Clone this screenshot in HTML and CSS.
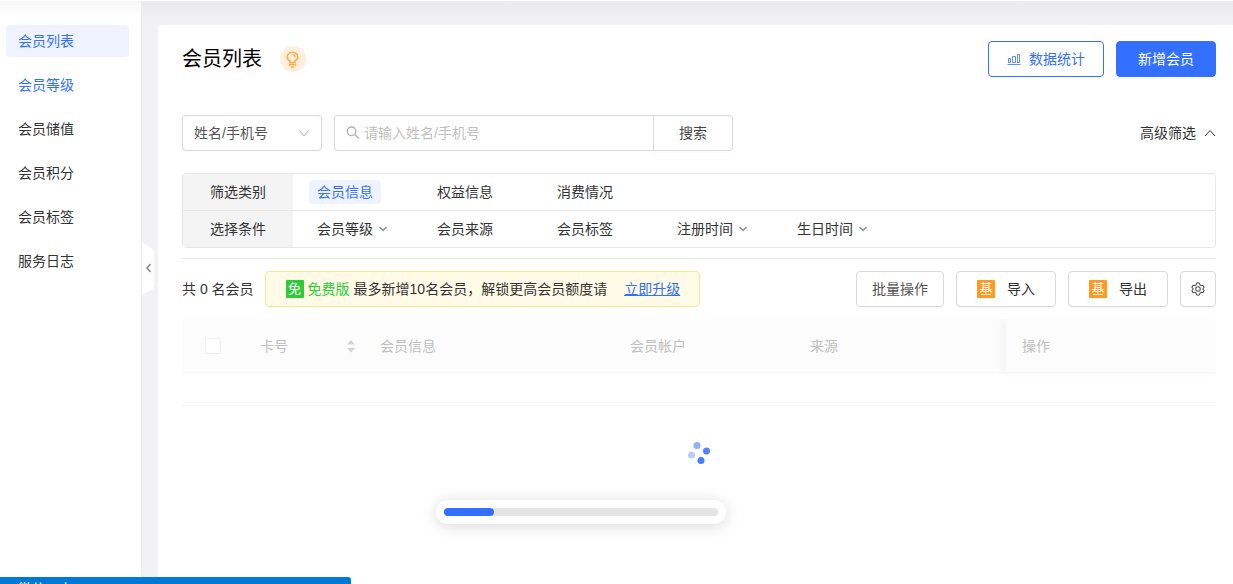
FILE: index.html
```html
<!DOCTYPE html>
<html lang="zh-CN">
<head>
<meta charset="utf-8">
<meta name="viewport" content="width=device-width, initial-scale=1">
<title>会员列表</title>
<link rel="stylesheet" href="styles.css">
</head>
<body>
<div class="app">
  <aside class="sidebar">
    <nav class="menu">
      <a class="menu-item selected" href="#">会员列表</a>
      <a class="menu-item hovered" href="#">会员等级</a>
      <a class="menu-item" href="#">会员储值</a>
      <a class="menu-item" href="#">会员积分</a>
      <a class="menu-item" href="#">会员标签</a>
      <a class="menu-item" href="#">服务日志</a>
    </nav>
    <button class="collapse" type="button" aria-label="收起菜单">
      <svg width="14" height="54" viewBox="0 0 14 54"><path d="M1 0L10 6Q13.500 8 13.500 12V42Q13.500 46 10 48L1 53Z" fill="#fff"/><path d="M9.500 22L6 26L9.500 30" fill="none" stroke="#80868d" stroke-width="1.500"/></svg>
    </button>
  </aside>

  <main class="panel">
    <header class="head">
      <h1 class="title">会员列表</h1>
      <span class="bulb">
        <svg width="26" height="26" viewBox="0 0 26 26" fill="none" stroke="#ffab4a" stroke-width="1.500"><path d="M10 16.800V14.800C8.200 14 7.200 12.600 7.200 11A5.300 4.800 0 0 1 17.800 11C17.800 12.600 16.800 14 15 14.800V16.800Z"/><path d="M12.500 8.500Q15 8.500 15.200 11" stroke-width="1.200"/><path d="M9 18.800H16M10.800 21H14.200"/></svg>
      </span>
      <div class="head-actions">
        <button class="btn btn-outline" type="button">
          <svg width="14" height="14" viewBox="0 0 14 14" fill="none" stroke="currentColor"><path d="M.5 12.500H13.500M1.500 10.500V6.500H3.500V10.500ZM5.500 10.500V4.500H8.500V10.500ZM10.500 10.500V2.500H12.500V10.500Z" stroke-width=".8"/></svg>
          数据统计
        </button>
        <button class="btn btn-primary" type="button">新增会员</button>
      </div>
    </header>

    <form class="search-row">
      <div class="select-box">
        <select aria-label="搜索字段"><option>姓名/手机号</option></select>
        <svg class="select-arrow" width="12" height="12" viewBox="0 0 12 12" fill="none" stroke="#b5b7ba"><path d="M1 2.500L6 9L11 2.500"/></svg>
      </div>
      <div class="search-group">
        <label class="search-field">
          <svg width="14" height="14" viewBox="0 0 14 14" fill="none" stroke="#b0b0b0" stroke-width="1.300"><circle cx="5.500" cy="5.300" r="4.300"/><path d="M8.700 8.500L13 12.500"/></svg>
          <input type="text" placeholder="请输入姓名/手机号" aria-label="姓名/手机号">
        </label>
        <button class="btn search-btn" type="button">搜索</button>
      </div>
      <button class="advanced" type="button">高级筛选
        <svg width="12" height="12" viewBox="0 0 12 12" fill="none" stroke="#333"><path d="M1 9L6 3.500L11 9"/></svg>
      </button>
    </form>

    <section class="filters">
      <div class="filter-row">
        <div class="filter-label">筛选类别</div>
        <div class="filter-items">
          <button class="filter-item active" type="button">会员信息</button>
          <button class="filter-item" type="button">权益信息</button>
          <button class="filter-item" type="button">消费情况</button>
        </div>
      </div>
      <div class="filter-row">
        <div class="filter-label">选择条件</div>
        <div class="filter-items">
          <button class="filter-item" type="button">会员等级 <svg width="10" height="10" viewBox="0 0 10 10"><path d="M1.500 3L5 6.500L8.500 3"/></svg></button>
          <button class="filter-item" type="button">会员来源</button>
          <button class="filter-item" type="button">会员标签</button>
          <button class="filter-item" type="button">注册时间 <svg width="10" height="10" viewBox="0 0 10 10"><path d="M1.500 3L5 6.500L8.500 3"/></svg></button>
          <button class="filter-item" type="button">生日时间 <svg width="10" height="10" viewBox="0 0 10 10"><path d="M1.500 3L5 6.500L8.500 3"/></svg></button>
        </div>
      </div>
    </section>

    <div class="toolbar">
      <span class="count">共 0 名会员</span>
      <div class="notice">
        <span class="tag tag-free">免</span>
        <span class="free">免费版</span>
        <span class="limit">最多新增10名会员，解锁更高会员额度请</span>
        <a class="upgrade" href="#">立即升级</a>
      </div>
      <div class="tools">
        <button class="btn tool-batch" type="button">批量操作</button>
        <button class="btn tool-io" type="button"><span class="tag tag-basic">基</span>导入</button>
        <button class="btn tool-io" type="button"><span class="tag tag-basic">基</span>导出</button>
        <button class="btn tool-gear" type="button" aria-label="设置">
          <svg width="14" height="14" viewBox="0 0 16 16" fill="none" stroke="#555" stroke-width="1.200" stroke-linejoin="round"><path d="M6.300 1.500L8 .8L9.700 1.500L10.300 3.400L11.800 4.200L13.700 3.700L15 6.200L13.700 7.500V8.500L15 9.800L13.700 12.300L11.800 11.800L10.300 12.600L9.700 14.500L8 15.200L6.300 14.500L5.700 12.600L4.200 11.800L2.300 12.300L1 9.800L2.300 8.500V7.500L1 6.200L2.300 3.700L4.200 4.200L5.700 3.400Z"/><circle cx="8" cy="8" r="2.600"/></svg>
        </button>
      </div>
    </div>

    <div class="table-wrap">
      <table class="members">
        <colgroup><col class="c-check"><col class="c-card"><col class="c-info"><col class="c-account"><col><col class="c-action"></colgroup>
        <thead>
          <tr>
            <th class="check"><input type="checkbox" aria-label="全选"></th>
            <th><span class="sortable">卡号<svg width="8" height="14" viewBox="0 0 8 14" fill="#d2d2d2"><path d="M4 1L8 5.500H0ZM4 13.500L8 9H0Z"/></svg></span></th>
            <th>会员信息</th>
            <th>会员帐户</th>
            <th>来源</th>
            <th class="fixed">操作</th>
          </tr>
        </thead>
        <tbody><tr><td colspan="6"></td></tr></tbody>
      </table>
    </div>
    <svg class="spinner" width="24" height="24" viewBox="0 0 24 24" fill="#3370ff" role="img" aria-label="加载中"><circle cx="10" cy="4.500" r="3.500" opacity=".55"/><circle cx="19.500" cy="10" r="3.500" opacity=".85"/><circle cx="4.500" cy="14" r="3.500" opacity=".35"/><circle cx="14" cy="19.500" r="3.500" opacity=".9"/></svg>
  </main>
</div>
<div class="progress-card"><div class="progress" role="progressbar" aria-label="加载进度" aria-valuenow="18" aria-valuemin="0" aria-valuemax="100"><div class="progress-fill" style="width:18.300%"></div></div></div>
<div class="status">微信 - 小二</div>
</body>
</html>
```
FILE: styles.css
```css
* { box-sizing: border-box; }
body {
  margin: 0;
  height: 100vh;
  overflow: hidden;
  background: #f2f2f5;
  color: #333;
  font: 14px/22px "Liberation Sans", "Noto Sans CJK SC", sans-serif;
}
button, input, select { font: inherit; color: inherit; }
button { margin: 0; padding: 0; border: 0; background: none; }
a { color: inherit; text-decoration: none; }
svg { display: block; flex: none; }

.app {
  display: flex;
  height: 100%;
  border-top: 1px solid #fff;
  background: linear-gradient(#ebebee, #f2f2f5 24px) padding-box;
}
.sidebar {
  position: relative;
  flex: none;
  width: 142px;
  padding: 24px 12px 0 6px;
  background: linear-gradient(#f7f7f7, #fff 16px);
  border-right: 1px solid #ebebee;
}
.menu { display: flex; flex-direction: column; gap: 12px; }
.menu-item { padding: 5px 12px; border-radius: 4px; }
.menu-item.selected { background: #eff3ff; color: #3370ff; }
.menu-item.hovered { color: #3370ff; }
.collapse { position: absolute; left: 100%; top: 241px; }

.panel {
  flex: 1;
  min-width: 0;
  margin: 24px 0 0 16px;
  padding: 16px 17px 0 24px;
  background: #fff;
  border-radius: 4px 0 0 0;
}
.head { display: flex; align-items: center; height: 36px; }
.title { margin: 0; font-size: 20px; line-height: 28px; font-weight: 400; color: #000; }
.bulb { margin-left: 18px; border-radius: 50%; background: #ffefdc; }
.head-actions { display: flex; gap: 12px; margin-left: auto; }
.btn {
  display: flex;
  align-items: center;
  justify-content: center;
  height: 36px;
  border: 1px solid #d9d9d9;
  border-radius: 4px;
  background: #fff;
  box-shadow: 0 2px 0 rgba(0, 0, 0, .015);
}
.btn-outline { gap: 8px; width: 116px; border-color: #3370ff; color: #3370ff; }
.btn-primary { width: 100px; border-color: #3370ff; background: #3370ff; color: #fff; }

.search-row { display: flex; align-items: center; gap: 12px; margin-top: 38px; }
.select-box { display: grid; align-items: center; width: 140px; }
.select-box > * { grid-area: 1 / 1; }
.select-box select {
  width: 100%;
  height: 36px;
  padding: 0 11px;
  border: 1px solid #d9d9d9;
  border-radius: 4px;
  background: #fff;
  color: #555;
  appearance: none;
}
.select-arrow { justify-self: end; margin-right: 12px; pointer-events: none; }
.search-group { display: flex; }
.search-field {
  display: flex;
  align-items: center;
  gap: 4px;
  width: 319px;
  height: 36px;
  padding: 0 11px;
  border: 1px solid #d9d9d9;
  border-right: 0;
  border-radius: 4px 0 0 4px;
}
.search-field input { flex: 1; min-width: 0; padding: 0; border: 0; outline: 0; background: none; }
.search-field input::placeholder { color: #bfbfbf; }
.search-btn { width: 80px; border-radius: 0 4px 4px 0; color: #444; }
.advanced { display: flex; align-items: center; gap: 8px; margin-left: auto; }

.filters { margin-top: 22px; border: 1px solid #e8e8e8; border-radius: 4px; }
.filter-row { display: flex; height: 36px; }
.filter-row + .filter-row { height: 37px; border-top: 1px solid #e8e8e8; }
.filter-label { display: flex; align-items: center; justify-content: center; width: 110px; background: #f4f4f4; }
.filter-items { display: grid; grid-template-columns: repeat(5, 120px); align-items: center; justify-items: start; padding-left: 16px; }
.filter-item { display: flex; align-items: center; gap: 5px; height: 24px; padding: 0 8px; border-radius: 4px; }
.filter-item.active { background: #eff3ff; color: #3370ff; }
.filter-item svg { fill: none; stroke: #8a8f94; stroke-width: 1.500; }

.toolbar {
  display: flex;
  align-items: center;
  margin-top: 10px;
  padding-top: 12px;
  border-top: 1px solid #e8e8e8;
}
.count { margin-right: 11px; white-space: nowrap; }
.notice {
  display: flex;
  align-items: center;
  height: 36px;
  padding: 0 19px 0 20px;
  border: 1px solid #ffe58f;
  border-radius: 4px;
  background: #fffbe6;
  white-space: nowrap;
}
.tag { width: 18px; height: 18px; font-size: 13px; line-height: 18px; text-align: center; color: #fff; }
.tag-free { background: #2ccc38; border-radius: 1px; }
.tag-basic { background: #ff9a1f; border-radius: 1px; }
.free { margin: 0 4px; color: #2ccc38; }
.upgrade { margin-left: 17px; color: #3370ff; text-decoration: underline; }
.tools { display: flex; gap: 12px; margin-left: auto; }
.tool-batch { width: 88px; color: #555; }
.tool-io { gap: 12px; width: 100px; }
.tool-gear { width: 36px; }

.table-wrap { margin-top: 12px; border-radius: 4px 4px 0 0; overflow: hidden; }
.members { width: 100%; border-spacing: 0; table-layout: fixed; }
.c-check { width: 62px; }
.c-card { width: 120px; }
.c-info { width: 250px; }
.c-account { width: 180px; }
.c-action { width: 210px; }
.members th {
  height: 54px;
  padding: 0 16px;
  border-bottom: 1px solid #f7f7f7;
  background: #fcfcfc;
  color: #bfbfbf;
  font-weight: 400;
  text-align: left;
}
.members th.check { padding: 0; text-align: center; }
.members input {
  display: block;
  width: 16px;
  height: 16px;
  margin: 0 auto;
  border: 1px solid #efefef;
  border-radius: 2px;
  background: #fff;
  appearance: none;
}
.sortable { display: flex; align-items: center; justify-content: space-between; margin-right: -7px; }
.members th.fixed { box-shadow: -4px 0 8px rgba(0, 0, 0, .04); }
.members td { height: 33px; padding: 0; border-bottom: 1px solid #f7f7f7; }
.spinner { margin: 35px auto 0; }

.progress-card {
  position: absolute;
  left: calc(50% - 181px);
  bottom: 60px;
  width: 290px;
  padding: 8px;
  border-radius: 12px;
  background: #fff;
  box-shadow: 0 2px 16px rgba(0, 0, 0, .15);
}
.progress { height: 8px; border-radius: 4px; background: #e5e5e5; }
.progress-fill { height: 100%; border-radius: 4px; background: #3370ff; }
.status {
  position: absolute;
  left: 0;
  bottom: 0;
  width: 351px;
  height: 7px;
  padding: 1px 0 0 18px;
  overflow: hidden;
  border-radius: 0 3px 0 0;
  background: #0078d7;
  color: #fff;
}
```
